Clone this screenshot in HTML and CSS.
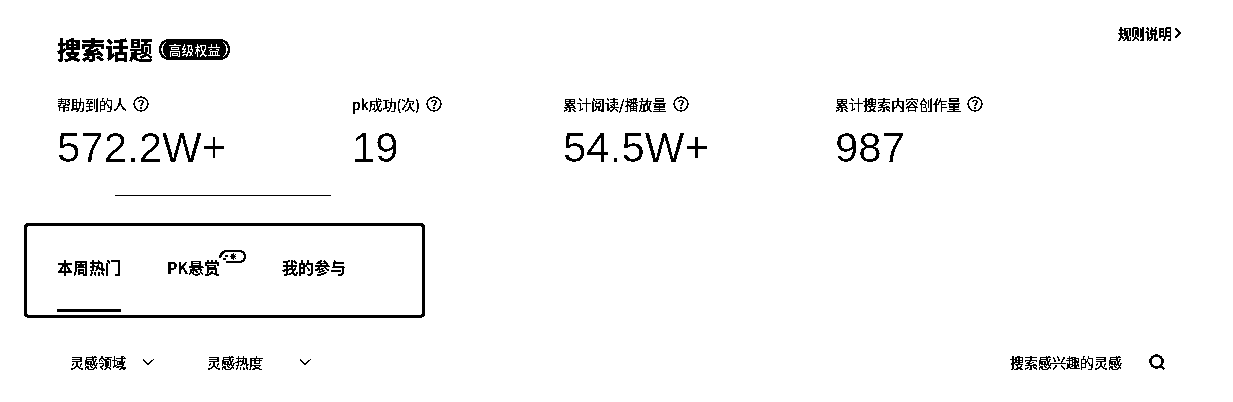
FILE: index.html
```html
<!DOCTYPE html>
<html lang="zh-CN">
<head>
	<meta charset="UTF-8">
	<title>搜索话题</title>
	<link rel="stylesheet" href="styles.css">
</head>
<body>
<svg class="defs" width="0" height="0">
	<filter id="bw" color-interpolation-filters="sRGB">
		<feColorMatrix type="saturate" values="0"/>
		<feComponentTransfer>
			<feFuncR type="discrete" tableValues="0 0 0 1"/>
			<feFuncG type="discrete" tableValues="0 0 0 1"/>
			<feFuncB type="discrete" tableValues="0 0 0 1"/>
		</feComponentTransfer>
	</filter>
	<filter id="thin" color-interpolation-filters="sRGB">
		<feFlood flood-color="#fff" result="bg"/>
		<feComposite in="SourceGraphic" in2="bg" operator="over"/>
		<feComponentTransfer>
			<feFuncR type="discrete" tableValues="0 1 1"/>
			<feFuncG type="discrete" tableValues="0 1 1"/>
			<feFuncB type="discrete" tableValues="0 1 1"/>
		</feComponentTransfer>
	</filter>
</svg>
<div class="page">
	<div class="head">
		<div class="title-wrap">
			<h1 class="title">搜索话题</h1>
			<span class="pill"><span class="pill-in">高级权益</span></span>
		</div>
		<a class="rules">规则说明
			<svg width="8" height="12" viewBox="0 0 8 12"><path d="M1.5 1.500 6 6l-4.500 4.500" fill="none" stroke="#000" stroke-width="1.400"/></svg>
		</a>
	</div>

	<div class="stats">
		<div class="stat s1">
			<div class="stat-label">帮助到的人 <svg class="help" viewBox="0 0 16 16"><circle cx="8" cy="8" r="6.900" fill="none" stroke="#000" stroke-width="1.200"/><path d="M5.900 6.300C5.900 4.900 7 4.300 8 4.300c1.200 0 2.100.8 2.100 1.900 0 1.600-2.100 1.700-2.100 3.400" fill="none" stroke="#000" stroke-width="1.200"/><circle cx="8" cy="11.600" r=".9"/></svg></div>
			<div class="stat-num">572.2W+</div>
		</div>
		<div class="stat s2">
			<div class="stat-label">pk成功(次) <svg class="help" viewBox="0 0 16 16"><circle cx="8" cy="8" r="6.900" fill="none" stroke="#000" stroke-width="1.200"/><path d="M5.900 6.300C5.900 4.900 7 4.300 8 4.300c1.200 0 2.100.8 2.100 1.900 0 1.600-2.100 1.700-2.100 3.400" fill="none" stroke="#000" stroke-width="1.200"/><circle cx="8" cy="11.600" r=".9"/></svg></div>
			<div class="stat-num">19</div>
		</div>
		<div class="stat s3">
			<div class="stat-label">累计阅读/播放量 <svg class="help" viewBox="0 0 16 16"><circle cx="8" cy="8" r="6.900" fill="none" stroke="#000" stroke-width="1.200"/><path d="M5.900 6.300C5.900 4.900 7 4.300 8 4.300c1.200 0 2.100.8 2.100 1.900 0 1.600-2.100 1.700-2.100 3.400" fill="none" stroke="#000" stroke-width="1.200"/><circle cx="8" cy="11.600" r=".9"/></svg></div>
			<div class="stat-num">54.5W+</div>
		</div>
		<div class="stat">
			<div class="stat-label">累计搜索内容创作量 <svg class="help" viewBox="0 0 16 16"><circle cx="8" cy="8" r="6.900" fill="none" stroke="#000" stroke-width="1.200"/><path d="M5.900 6.300C5.900 4.900 7 4.300 8 4.300c1.200 0 2.100.8 2.100 1.900 0 1.600-2.100 1.700-2.100 3.400" fill="none" stroke="#000" stroke-width="1.200"/><circle cx="8" cy="11.600" r=".9"/></svg></div>
			<div class="stat-num">987</div>
		</div>
	</div>

	<div class="rule"></div>

	<div class="tabs">
		<div class="tab active">本周热门</div>
		<div class="tab pk">PK悬赏
			<svg class="tab-badge" width="27" height="14" viewBox="0 0 27 14">
				<path d="M1 8C2 3 5 1 8 1h12c3 0 6 2 6 5.500S23 12 20 12H7" fill="none" stroke="#000" stroke-width="2"/>
				<path d="M14 3.500v6M11 6.500h6M12 4.500l4 4M16 4.500l-4 4" stroke="#000" stroke-width="1"/>
				<path d="M6 6h2.500M4 9h2.500" stroke="#000" stroke-width="1.200"/>
			</svg>
		</div>
		<div class="tab">我的参与</div>
	</div>

	<div class="filters">
		<div class="filter f1">灵感领域
			<svg class="chev" width="12" height="8" viewBox="0 0 12 8"><path d="M1 1.500 6 6.500l5-5" fill="none" stroke="#000"/></svg>
		</div>
		<div class="filter f2">灵感热度
			<svg class="chev" width="12" height="8" viewBox="0 0 12 8"><path d="M1 1.500 6 6.500l5-5" fill="none" stroke="#000"/></svg>
		</div>
		<div class="search">搜索感兴趣的灵感
			<svg width="16" height="16" viewBox="0 0 16 16"><circle cx="7.500" cy="7.500" r="6" fill="none" stroke="#000" stroke-width="2.200"/><path d="m11.500 11.500 3.500 3.500" stroke="#000" stroke-width="2"/></svg>
		</div>
	</div>
</div>
</body>
</html>
```
FILE: styles.css
```css
html {
	background: #fff;
}
body {
	margin: 0;
	background: #fff;
	color: #000;
	font-family: "Noto Sans CJK SC", "Noto Sans", sans-serif;
}
.defs {
	display: block;
	height: 0;
}
.page {
	height: 402px;
	overflow: hidden;
	background: #fff;
	filter: url(#bw);
}
.head {
	display: flex;
	justify-content: space-between;
	align-items: flex-start;
	padding: 25px 51px 0 57px;
}
.title-wrap {
	display: flex;
	align-items: center;
	gap: 6px;
	height: 48px;
}
.title {
	margin: 0;
	font-size: 24px;
	line-height: 48px;
	font-weight: 700;
}
.pill {
	box-sizing: border-box;
	display: block;
	width: 71px;
	height: 21px;
	padding: 0 2px;
	border: 2px solid #000;
	border-radius: 11px;
}
.pill-in {
	display: block;
	height: 17px;
	border-radius: 8px;
	background: #000;
	color: #fff;
	font-size: 13px;
	line-height: 17px;
	font-weight: 700;
	text-align: center;
	white-space: nowrap;
}
.rules {
	display: flex;
	align-items: center;
	gap: 2px;
	font-size: 13.500px;
	line-height: 18px;
	font-weight: 500;
	margin-top: -1px;
}
.stats {
	display: flex;
	padding: 21px 0 0 57px;
}
.s1 { width: 295px; }
.s2 { width: 211px; }
.s3 { width: 272px; }
.stat-label {
	display: flex;
	align-items: center;
	gap: 6px;
	font-size: 14px;
	line-height: 20px;
}
.help {
	width: 16px;
	height: 16px;
}
.stat-num {
	margin-top: 9px;
	font-family: "Liberation Sans", sans-serif;
	font-size: 42px;
	line-height: 50px;
	filter: url(#thin);
}
.rule {
	width: 216px;
	height: 1px;
	margin: 22px 0 0 115px;
	background: #000;
}
.tabs {
	box-sizing: border-box;
	display: flex;
	width: 401px;
	height: 95px;
	margin: 27px 0 0 24px;
	padding-left: 30px;
	border: 3px solid #000;
	border-radius: 5px;
}
.tab {
	position: relative;
	width: 64px;
	font-size: 16px;
	line-height: 82px;
	font-weight: 500;
	white-space: nowrap;
}
.pk {
	width: 53px;
	margin: 0 62px 0 46px;
}
.active::after {
	content: "";
	position: absolute;
	left: 0;
	right: 0;
	bottom: 3px;
	height: 3px;
	background: #000;
}
.tab-badge {
	position: absolute;
	left: 52px;
	top: 24px;
}
.filters {
	display: flex;
	align-items: center;
	padding: 34px 68px 0 70px;
	font-size: 14px;
	line-height: 20px;
}
.filter {
	display: flex;
	align-items: center;
}
.f1 {
	gap: 16px;
	width: 137px;
}
.f2 {
	gap: 36px;
}
.search {
	display: flex;
	align-items: center;
	gap: 27px;
	margin-left: auto;
}
```
